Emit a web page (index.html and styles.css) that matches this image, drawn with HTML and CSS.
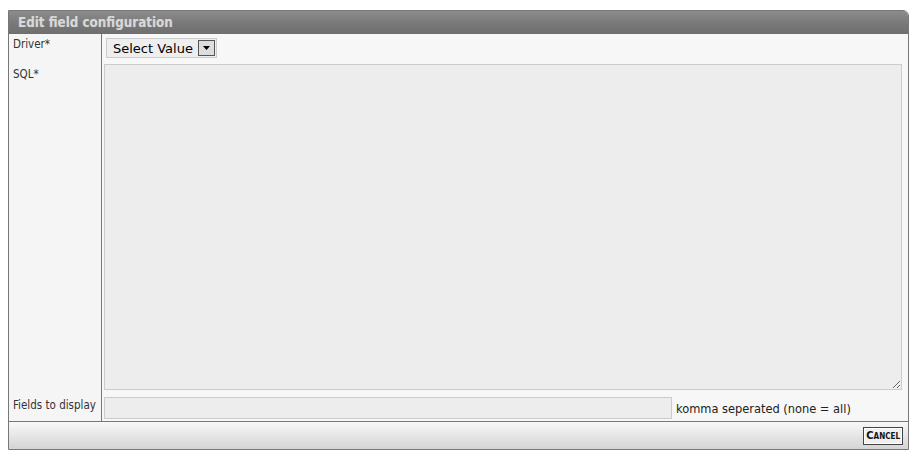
FILE: index.html
```
<!DOCTYPE html>
<html lang="en">
<head>
	<meta charset="UTF-8">
	<title>Edit field configuration</title>
	<link rel="stylesheet" href="styles.css">
</head>
<body>
	<div class="dialog">
		<div class="dialog-title">Edit field configuration</div>
		<table class="form">
			<tr class="row-driver">
				<td class="label">Driver*</td>
				<td class="value">
					<div class="select">
						<span class="select-text">Select Value</span>
						<span class="select-arrow"><svg width="7" height="4" viewBox="0 0 7 4"><path d="M0 0h7L3.5 4z" fill="#000"/></svg></span>
					</div>
				</td>
			</tr>
			<tr class="row-sql">
				<td class="label">SQL*</td>
				<td class="value"><textarea class="sql"></textarea></td>
			</tr>
			<tr class="row-fields">
				<td class="label label-mid">Fields to display</td>
				<td class="value">
					<div class="fields">
						<input type="text" class="fields-input">
						<span class="hint">komma seperated (none = all)</span>
					</div>
				</td>
			</tr>
		</table>
		<div class="dialog-footer">
			<button class="btn">Cancel</button>
		</div>
	</div>
</body>
</html>
```

FILE: styles.css
```
*{padding: 0;margin: 0;box-sizing: border-box;}
body{
	background: #fff;
	font-family: "DejaVu Sans Condensed", "DejaVu Sans", Verdana, sans-serif;
	font-size: 11.5px;
	color: #333;
	padding: 10px 0 0 8px;
}
.dialog{
	width: 901px;
	border: 1px solid #777;
	border-top-right-radius: 6px;
	background: #f5f5f5;
}
.dialog-title{
	height: 23px;
	padding: 3px 0 0 9px;
	background: linear-gradient(#8c8c8c, #777 60%, #6f6f6f);
	border-top-right-radius: 5px;
	color: #d8d8d8;
	font-weight: bold;
	font-size: 13.3px;
	line-height: 18px;
	text-shadow: 0 0 1px #999;
}
.form{
	width: 100%;
	border-collapse: collapse;
}
.form td{
	vertical-align: top;
}
.label{
	width: 93px;
	padding: 3px 0 0 4px;
	border-right: 1px solid #777;
	color: #333;
	white-space: nowrap;
}
.label-mid{
	padding-top: 8px;
}
.value{
	background: #f7f7f7;
	padding: 0 6px 0 2px;
}
.row-driver td{
	height: 30px;
}
.row-driver .value{
	padding-top: 4px;
	padding-left: 4px;
}
.select{
	display: inline-flex;
	align-items: center;
	height: 20px;
	border: 1px solid #ccc;
	background: #eee;
	padding: 0 1px 0 6px;
}
.select-text{
	font-family: "DejaVu Sans", Verdana, sans-serif;
	font-size: 13px;
	color: #000;
	padding-right: 5px;
}
.select-arrow{
	display: flex;
	align-items: center;
	justify-content: center;
	width: 17px;
	height: 16px;
	border: 1px solid #555;
	background: #ddd;
}
.sql{
	display: block;
	width: 798px;
	height: 326px;
	background: #ededed;
	border: 1px solid #ccc;
	resize: vertical;
}
.row-fields .value{
	padding-top: 7px;
	padding-bottom: 2px;
}
.fields{
	display: flex;
	align-items: center;
}
.fields-input{
	width: 568px;
	height: 22px;
	background: #ededed;
	border: 1px solid #ccc;
}
.hint{
	font-size: 12.7px;
	color: #222;
	margin-left: 4px;
}
.dialog-footer{
	height: 28px;
	border-top: 1px solid #777;
	background: linear-gradient(#f8f8f8, #d4d4d4);
	display: flex;
	justify-content: flex-end;
	align-items: center;
	padding: 0 5px 0 0;
}
.btn{
	height: 18px;
	padding: 0 2px;
	border: 1px solid #444;
	background: #f0f0f0;
	box-shadow: inset 0 0 0 1px #fff;
	font-family: "DejaVu Sans Condensed", "DejaVu Sans", Verdana, sans-serif;
	font-size: 11px;
	font-weight: bold;
	font-variant: small-caps;
	color: #111;
}
```
